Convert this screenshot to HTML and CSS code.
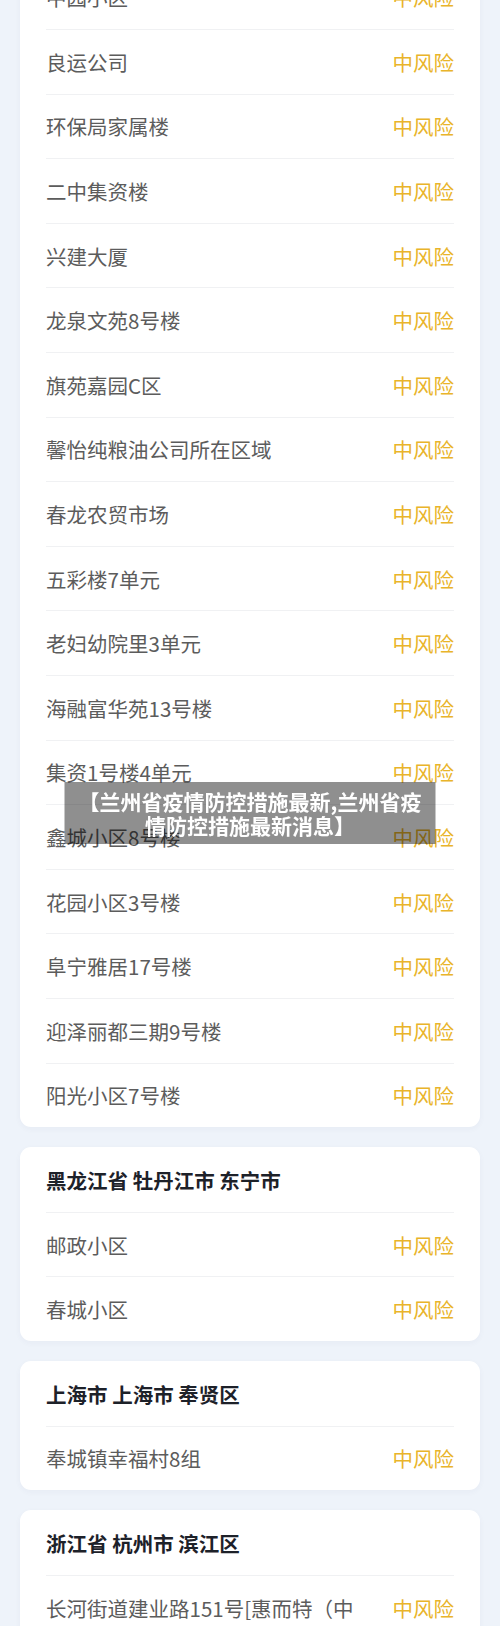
FILE: index.html
```html
<!DOCTYPE html>
<html lang="zh-CN">
<head>
    <meta charset="UTF-8">
    <meta name="viewport" content="width=device-width, initial-scale=1.0">
    <title>兰州省疫情防控措施最新</title>
    <link rel="stylesheet" href="styles.css">
</head>
<body>
    <div class="list">
        <div class="card card-first">
            <div class="row"><span class="name">中园小区</span><span class="risk">中风险</span></div>
            <div class="row"><span class="name">良运公司</span><span class="risk">中风险</span></div>
            <div class="row"><span class="name">环保局家属楼</span><span class="risk">中风险</span></div>
            <div class="row"><span class="name">二中集资楼</span><span class="risk">中风险</span></div>
            <div class="row"><span class="name">兴建大厦</span><span class="risk">中风险</span></div>
            <div class="row"><span class="name">龙泉文苑8号楼</span><span class="risk">中风险</span></div>
            <div class="row"><span class="name">旗苑嘉园C区</span><span class="risk">中风险</span></div>
            <div class="row"><span class="name">馨怡纯粮油公司所在区域</span><span class="risk">中风险</span></div>
            <div class="row"><span class="name">春龙农贸市场</span><span class="risk">中风险</span></div>
            <div class="row"><span class="name">五彩楼7单元</span><span class="risk">中风险</span></div>
            <div class="row"><span class="name">老妇幼院里3单元</span><span class="risk">中风险</span></div>
            <div class="row"><span class="name">海融富华苑13号楼</span><span class="risk">中风险</span></div>
            <div class="row"><span class="name">集资1号楼4单元</span><span class="risk">中风险</span></div>
            <div class="row"><span class="name">鑫城小区8号楼</span><span class="risk">中风险</span></div>
            <div class="row"><span class="name">花园小区3号楼</span><span class="risk">中风险</span></div>
            <div class="row"><span class="name">阜宁雅居17号楼</span><span class="risk">中风险</span></div>
            <div class="row"><span class="name">迎泽丽都三期9号楼</span><span class="risk">中风险</span></div>
            <div class="row"><span class="name">阳光小区7号楼</span><span class="risk">中风险</span></div>
        </div>

        <div class="card">
            <div class="card-head">黑龙江省 牡丹江市 东宁市</div>
            <div class="row"><span class="name">邮政小区</span><span class="risk">中风险</span></div>
            <div class="row"><span class="name">春城小区</span><span class="risk">中风险</span></div>
        </div>

        <div class="card">
            <div class="card-head">上海市 上海市 奉贤区</div>
            <div class="row"><span class="name">奉城镇幸福村8组</span><span class="risk">中风险</span></div>
        </div>

        <div class="card">
            <div class="card-head">浙江省 杭州市 滨江区</div>
            <div class="row"><span class="name">长河街道建业路151号[惠而特（中国）餐饮设备有限公司]</span><span class="risk">中风险</span></div>
        </div>
    </div>

    <div class="banner">【兰州省疫情防控措施最新,兰州省疫情防控措施最新消息】</div>
</body>
</html>
```

FILE: styles.css
```css
body {
    margin: 0;
    background-color: #eef3fa;
    font-family: "Noto Sans CJK SC", "Noto Sans", sans-serif;
    overflow: hidden;
}

.list {
    display: flex;
    flex-direction: column;
    gap: 20px;
    padding: 0 20px 40px;
}

.card {
    background-color: #fff;
    border-radius: 11px;
    padding: 0 26px;
    box-shadow: 0 2px 6px rgba(40, 60, 90, 0.04);
}

.card-first {
    margin-top: -35.5px;
}

.card-head {
    height: 64.6px;
    display: flex;
    align-items: center;
    font-size: 20.5px;
    font-weight: 700;
    color: #1d2129;
    padding-top: 1px;
    box-sizing: border-box;
}

.row {
    display: flex;
    justify-content: space-between;
    align-items: flex-start;
    border-top: 1px solid #f0f1f3;
    padding: 16.8px 0;
    line-height: 30px;
    font-size: 20.5px;
}

.card-first .row:first-child {
    border-top: none;
    padding-top: 17.8px;
}

.name {
    color: #5c5c5c;
    max-width: 318px;
}

.risk {
    color: #e9b42a;
    white-space: nowrap;
}

.banner {
    position: fixed;
    left: 50%;
    top: 50%;
    transform: translate(-50%, -50%);
    width: 371px;
    box-sizing: border-box;
    padding: 7px 10px;
    background-color: rgba(0, 0, 0, 0.44);
    color: #fff;
    font-size: 21px;
    font-weight: 700;
    line-height: 24px;
    text-align: center;
}
```
